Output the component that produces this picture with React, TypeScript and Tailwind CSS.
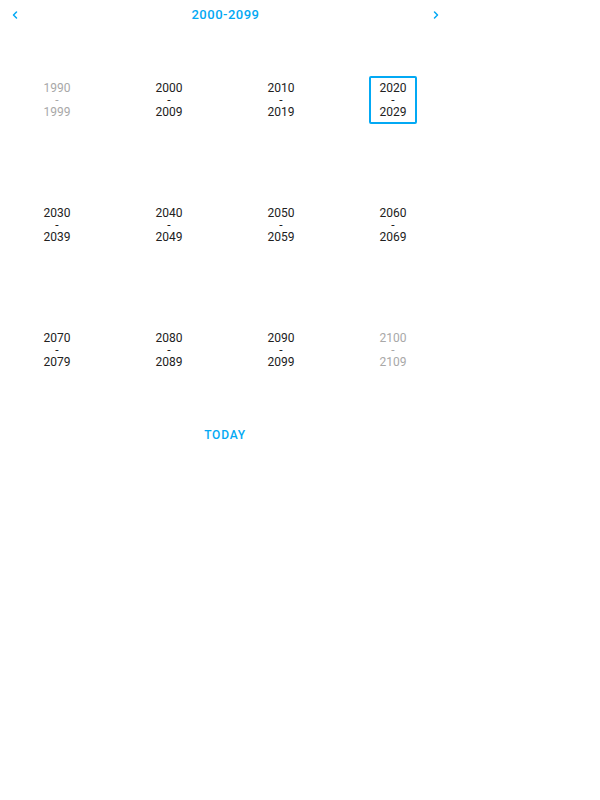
import { ChevronLeft, ChevronRight } from 'lucide-react';

const rows = [
  [1990, 2000, 2010, 2020],
  [2030, 2040, 2050, 2060],
  [2070, 2080, 2090, 2100],
];

function Decade({ start }: { start: number }) {
  const outside = start < 2000 || start > 2090;
  const selected = start === 2020;
  return (
    <div className="flex h-[125px] items-center justify-center">
      <div
        className={`flex h-[48px] w-[48px] flex-col items-center justify-center rounded-[2px] border-2 text-[12px] leading-[12px] ${
          selected ? 'border-[#03a9f4]' : 'border-transparent'
        } ${outside ? 'text-[#a8a8a8]' : 'text-[#212121]'}`}
      >
        <span>{start}</span>
        <span>-</span>
        <span>{start + 9}</span>
      </div>
    </div>
  );
}

export default function App() {
  return (
    <div className="w-[450px] bg-white" style={{ fontFamily: 'Roboto, "Liberation Sans", sans-serif' }}>
      <div className="flex h-[30px] items-center justify-between pl-[9px] pr-[8px] text-[#03a9f4]">
        <ChevronLeft className="h-[12px] w-[12px]" strokeWidth={3} />
        <span className="text-[13px] font-medium tracking-[0.5px]">2000-2099</span>
        <ChevronRight className="h-[12px] w-[12px]" strokeWidth={3} />
      </div>
      <div className="mt-[7px] grid grid-cols-4 px-[1px]">
        {rows.flat().map((s) => (
          <Decade key={s} start={s} />
        ))}
      </div>
      <div className="flex h-[46px] items-center justify-center">
        <span className="text-[12px] font-medium tracking-[0.8px] text-[#03a9f4]">TODAY</span>
      </div>
    </div>
  );
}
